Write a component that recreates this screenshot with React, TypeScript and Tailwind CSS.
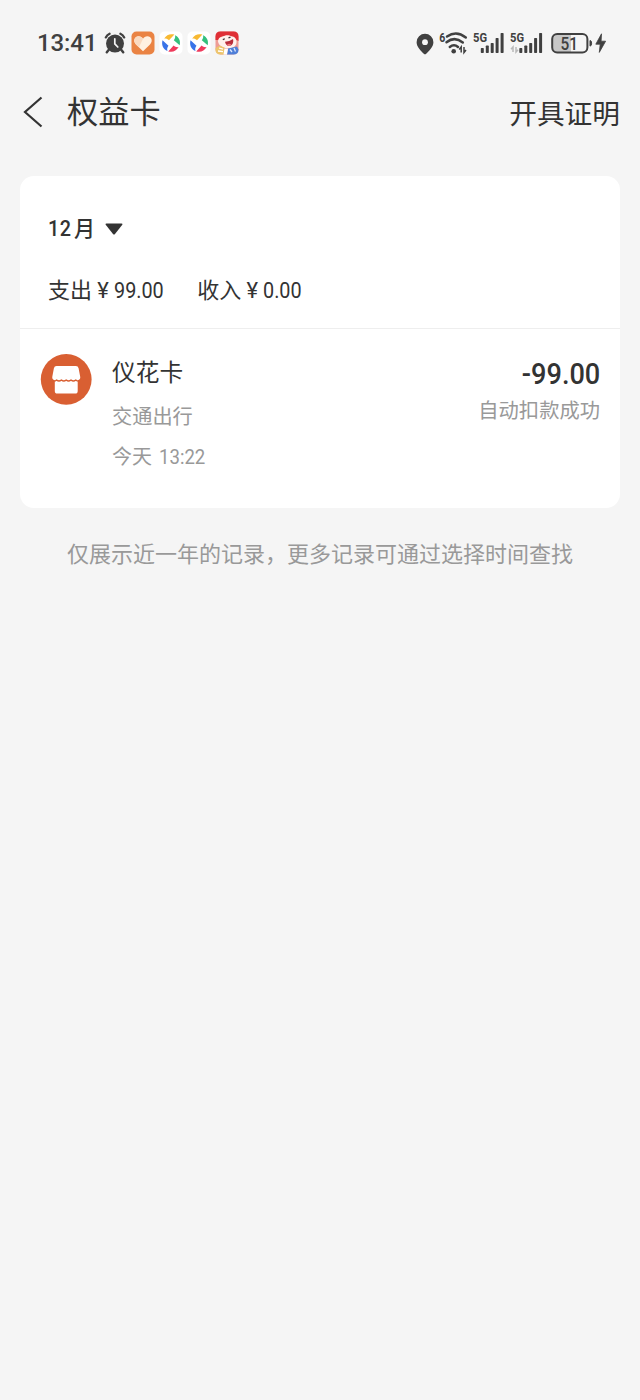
const apps = ['heart', 'swirl', 'swirl', 'mascot'] as const;

function AlarmIcon() {
  return (
    <svg viewBox="0 0 22 22" className="h-[22px] w-[22px]" fill="none">
      <circle cx="11" cy="11.6" r="9" fill="#404040" />
      <path d="M1.800 5.400Q3 3 5.600 1.800M20.200 5.400Q19 3 16.400 1.800" stroke="#404040" strokeWidth="2.300" strokeLinecap="round" />
      <path d="M4.600 18l-1.800 2.200M17.400 18l1.800 2.200" stroke="#404040" strokeWidth="2.500" strokeLinecap="round" />
      <path d="M10.800 6.800v5l3 3.200" stroke="#f5f5f5" strokeWidth="1.700" strokeLinecap="round" />
    </svg>
  );
}

function HeartApp() {
  return (
    <svg viewBox="0 0 24 24" className="h-6 w-6">
      <rect x="0.5" y="0.5" width="23" height="23" rx="5" fill="#ea8343" />
      <path d="M12 20.200L5 13.400C1.600 9.800 3.600 5.200 7.600 5.200c2 0 3.500 1 4.400 2.600.9-1.600 2.400-2.600 4.400-2.600 4 0 6 4.600 2.600 8.200z" fill="#fff1e2" />
      <path d="M12 7.800C11.100 6.200 9.600 5.200 7.600 5.200 3.600 5.200 1.600 9.800 5 13.400l3 2.900z" fill="#fadac0" />
    </svg>
  );
}

function SwirlApp() {
  return (
    <svg viewBox="0 0 24 24" className="h-6 w-6">
      <rect x="0.5" y="0.5" width="23" height="23" rx="5" fill="#fff" />
      <path d="M5.200 7.600C7.600 3.400 11.400 2.400 15.400 3.600L10 9.200C8.400 7.800 6.800 7.300 5.200 7.600z" fill="#f8b932" />
      <path d="M16 4.300c4.200 2 5.800 5.800 4.700 10L14.800 9.200c1.300-1.500 1.700-3.200 1.200-4.900z" fill="#34c07c" />
      <path d="M19.600 16c-2.300 4.200-6 5.600-10.400 4.400l5.400-5.800c1.500 1.300 3.200 1.800 5 1.400z" fill="#ef3b5c" />
      <path d="M8.500 20C4 18 2.300 14 3.500 9.200l6 5.600c-1.300 1.600-1.600 3.500-1 5.200z" fill="#3873e8" />
    </svg>
  );
}

function MascotApp() {
  return (
    <svg viewBox="0 0 24 24" className="h-6 w-6">
      <rect x="0.5" y="0.5" width="23" height="23" rx="5" fill="#ee9c95" />
      <path d="M.5 9V5.500q0-5 5-5h13q5 0 5 5V10l-4-2-3-3H7L4 9z" fill="#df2f35" />
      <path d="M3 10.500c0-3 2-5 4.500-4.500C9.500 4 14 3.500 16.500 5.500c3 0 5 2 5 5.500 0 4-3.500 6.500-8 6.500S4 15.500 3 10.500z" fill="#fff1ec" />
      <path d="M10 10.800q4.500-.3 8-2.800c1 4-1 7-4 7-2 0-3.500-1.700-4-4.200z" fill="#b92d3a" />
      <path d="M12 13.800q2-1.800 4.300-.4-1 1.600-2.300 1.600t-2-1.200z" fill="#ee7a7d" />
      <path d="M7.800 8.600l2-.8M13.500 6.900l2-.8" stroke="#403238" strokeWidth="1.200" />
      <path d="M.5 17l4.500-2.500 5 2.500-1 6.500H5.500q-5 0-5-5z" fill="#edc56d" />
      <path d="M4 17l4 1.200M3 20l5 .6" stroke="#fff" strokeWidth="1.300" />
      <path d="M13 17.500l9-2 1.500 3q0 5-5 5H12z" fill="#4e7fd8" />
      <path d="M15 18.500l2 2.500M19 17l1.500 3.500" stroke="#dce8fc" strokeWidth="1.300" />
      <path d="M9.500 17.500l3.500.5-1 5.500H8.500z" fill="#fff" />
    </svg>
  );
}

function PinIcon() {
  return (
    <svg viewBox="0 0 18 22" className="h-[22px] w-[18px]">
      <path d="M9 .8a8.400 8.400 0 0 0-8.400 8.400c0 5 4.600 8.600 7.200 11.600.7.700 1.700.7 2.400 0 2.600-3 7.200-6.600 7.200-11.600A8.400 8.400 0 0 0 9 .8z" fill="#404040" />
      <circle cx="9" cy="9.200" r="2.900" fill="#f5f5f5" />
    </svg>
  );
}

function WifiIcon() {
  return (
    <svg viewBox="0 -4 30 32" className="h-8 w-[30px]" fill="none" stroke="#404040">
      <text x="0.300" y="9.500" fontSize="12.500" fontWeight="700" fontFamily="Roboto, sans-serif" textLength="6" lengthAdjust="spacingAndGlyphs" fill="#404040" stroke="none">6</text>
      <path d="M8 4.500Q17.500-2 26.800 5.500" strokeWidth="2.500" strokeLinecap="round" />
      <path d="M7.500 10.200Q15.500 4 23.800 10.400" strokeWidth="2.500" strokeLinecap="round" />
      <path d="M10.800 15Q15 11.400 19 15" strokeWidth="2.500" strokeLinecap="round" />
      <circle cx="14.700" cy="19.200" r="2.300" fill="#404040" stroke="none" />
      <path d="M22.200 20.500V15l-2 2.500M25 15v5.500l2-2.500" strokeWidth="1.500" />
    </svg>
  );
}

function SignalIcon({ idle = false }: { idle?: boolean }) {
  return (
    <svg viewBox="0 -4 34 32" className="h-8 w-[34px]" fill="#404040">
      <text x="0" y="10" fontSize="13" fontWeight="700" fontFamily="Roboto, sans-serif" textLength="14" lengthAdjust="spacingAndGlyphs">5G</text>
      {idle && <path d="M3 20v-5l-2 2.200M6 15v5l2-2.200" fill="none" stroke="#b9b9b9" strokeWidth="1.500" />}
      <g transform={idle ? 'translate(1.500 0)' : undefined}>
        <rect x="7.800" y="16" width="3" height="5" rx=".7" />
        <rect x="12.800" y="13.500" width="3" height="7.500" rx=".7" />
        <rect x="17.700" y="11" width="3" height="10" rx=".7" />
        <rect x="22.600" y="6" width="3" height="15" rx=".7" />
        <rect x="27.600" y="1" width="3" height="20" rx=".7" />
      </g>
    </svg>
  );
}

function BatteryIcon() {
  return (
    <svg viewBox="0 0 56 24" className="h-6 w-14">
      <rect x="1.200" y="2" width="35.200" height="18.600" rx="5" fill="#f5f5f5" />
      <path d="M6.200 2H20v18.600H6.200a5 5 0 0 1-5-5V7a5 5 0 0 1 5-5z" fill="#c7c7c7" />
      <rect x="1.200" y="2" width="35.200" height="18.600" rx="5" fill="none" stroke="#404040" strokeWidth="2" />
      <text x="18.300" y="17.500" fontSize="17.500" fontWeight="500" fontFamily="Roboto, sans-serif" textAnchor="middle" textLength="17.500" lengthAdjust="spacingAndGlyphs" fill="#404040">51</text>
      <path d="M39 8.500q1.600 0 1.600 2.800T39 14.100z" fill="#404040" stroke="#404040" />
      <path d="M50.500 1.800L44.800 12.200h4.400l-.9 8.200L54.600 9.200h-4.500z" fill="#404040" stroke="#404040" strokeWidth="0.800" strokeLinejoin="round" />
    </svg>
  );
}

function StatusBar() {
  return (
    <div className="flex h-[86px] items-center justify-between pl-[37px] pr-[33px]">
      <div className="flex items-center">
        <span className="w-[67px] text-[24px] font-medium leading-6 tracking-[-0.1px] text-[#404040]">13:41</span>
        <AlarmIcon />
        <div className="ml-[5px] flex gap-1">
          {apps.map((app, i) => (
            <span key={i}>
              {app === 'heart' && <HeartApp />}
              {app === 'swirl' && <SwirlApp />}
              {app === 'mascot' && <MascotApp />}
            </span>
          ))}
        </div>
      </div>
      <div className="flex items-center pt-px">
        <PinIcon />
        <div className="ml-[5px] mr-1 flex">
          <WifiIcon />
        </div>
        <div className="mr-[7px] flex gap-[3px]">
          <SignalIcon />
          <SignalIcon idle />
        </div>
        <BatteryIcon />
      </div>
    </div>
  );
}

function Total({ label, amount }: { label: string; amount: string }) {
  return (
    <div className="flex items-center text-[22px] leading-8">
      <span>{label}</span>
      <span className="w-[22px] text-center">¥</span>
      <span className="origin-left scale-x-[0.9]">{amount}</span>
    </div>
  );
}

function ShopBadge() {
  return (
    <svg viewBox="0 0 52 52" className="h-[52px] w-[52px] shrink-0">
      <circle cx="26.200" cy="26.400" r="25.400" fill="#d95f32" />
      <path d="M16.500 13h19.400q2.200 0 2.700 2.200l1.600 8.600q.5 3-2.500 3.400v10.700q0 2.600-2.600 2.600H17.400q-2.600 0-2.600-2.600V27.200q-3-.4-2.500-3.400l1.600-8.600q.5-2.200 2.600-2.200z" fill="#fff" />
      <path d="M12.300 27.800q2.600.8 4.300-.8 2.400 2 4.800 0 2.400 2 4.800 0 2.400 2 4.800 0 2.400 2 4.800 0 1.900 1.600 4.400.8" fill="none" stroke="#d95f32" strokeWidth="1.300" strokeLinejoin="round" />
    </svg>
  );
}

export default function App() {
  return (
    <main className="min-h-[1400px] w-[640px] bg-[#f5f5f5] font-[Roboto,'Noto_Sans_CJK_SC',sans-serif] text-[#333]">
      <StatusBar />

      <header className="flex h-[90px] items-start pl-[22px] pr-5">
        <svg viewBox="0 0 22 34" className="mt-[9px] h-[34px] w-[22px]" fill="none" stroke="#333" strokeWidth="2.200">
          <path d="M19.500 2.500L3 17l16.500 14.500" />
        </svg>
        <h1 className="ml-[23px] mt-[5px] text-[31.200px] leading-[44px]">权益卡</h1>
        <button className="ml-auto mt-[9px] text-[27.700px] leading-10">开具证明</button>
      </header>

      {/* Monthly records */}
      <section className="mx-5 h-[332px] rounded-[14px] bg-white">
        <div className="h-[153px] border-b border-[#eeeeee] px-7 pt-[37px]">
          <button className="flex h-8 items-center text-[22px] font-medium leading-8">
            <span className="w-[26px] origin-left scale-x-[0.9] text-left tracking-[0.5px]">12</span>
            <span className="text-[21px]">月</span>
            <svg viewBox="0 0 18 12" className="ml-[10px] h-3 w-[18px]">
              <path d="M1.500.5h15q1.600 0 .6 1.500L10 11q-1 1-2 0L.9 2Q-.1.5 1.500.5z" fill="#333" />
            </svg>
          </button>
          <div className="mt-[30px] flex gap-[28px]">
            <Total label="支出" amount="99.00" />
            <Total label="收入" amount="0.00" />
          </div>
        </div>

        <div className="flex px-5">
          <div className="mt-[24px]">
            <ShopBadge />
          </div>
          <div className="ml-5 mt-[26px] flex flex-col">
            <span className="text-[23.700px] leading-9">仪花卡</span>
            <span className="mt-[10px] text-[20.200px] leading-8 text-[#999]">交通出行</span>
            <span className="mt-[8px] flex gap-[7px] text-[20px] leading-8 text-[#999]">
              今天
              <span className="origin-left scale-x-[0.93]">13:22</span>
            </span>
          </div>
          <div className="ml-auto mt-[27px] flex flex-col items-end">
            <span className="origin-right scale-x-[0.92] text-[29.500px] font-medium leading-9">-99.00</span>
            <span className="mt-[3px] text-[20.300px] leading-8 text-[#999]">自动扣款成功</span>
          </div>
        </div>
      </section>

      <p className="mt-[31px] text-center text-[22px] leading-8 text-[#999]">
        仅展示近一年的记录，更多记录可通过选择时间查找
      </p>
    </main>
  );
}
